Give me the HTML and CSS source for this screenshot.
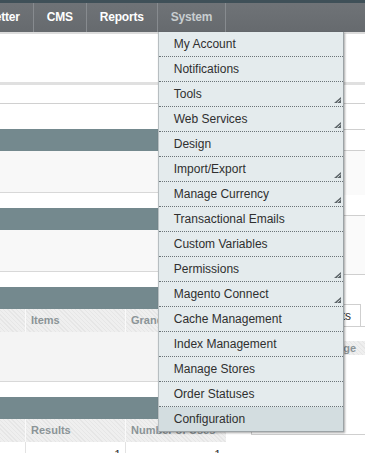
FILE: index.html
```html
<!DOCTYPE html>
<html lang="en">
<head>
  <meta charset="UTF-8" />
  <title>Magento Admin - System</title>
  <link rel="stylesheet" href="styles.css">
</head>
<body>

  <div class="header-strip"></div>
  <div class="nav-bar">
    <ul class="nav">
      <li class="nav-item">Newsletter</li>
      <li class="nav-item">CMS</li>
      <li class="nav-item">Reports</li>
      <li class="nav-item active">System
        <ul class="dropdown">
          <li>My Account</li>
          <li>Notifications</li>
          <li class="parent">Tools</li>
          <li class="parent">Web Services</li>
          <li>Design</li>
          <li class="parent">Import/Export</li>
          <li class="parent">Manage Currency</li>
          <li>Transactional Emails</li>
          <li>Custom Variables</li>
          <li class="parent">Permissions</li>
          <li class="parent">Magento Connect</li>
          <li>Cache Management</li>
          <li>Index Management</li>
          <li>Manage Stores</li>
          <li>Order Statuses</li>
          <li class="over">Configuration</li>
        </ul>
      </li>
    </ul>
  </div>
  <div class="nav-shadow"></div>

  <div class="page-head"></div>
  <div class="page-sub"></div>

  <div class="columns">
    <div class="col-left">
      <div class="box">
        <div class="box-head"></div>
        <div class="box-body"></div>
      </div>
      <div class="box">
        <div class="box-head"></div>
        <div class="box-body"></div>
      </div>
      <div class="box">
        <div class="box-head"></div>
        <div class="grid-head">
          <div class="cell first"></div>
          <div class="cell">Items</div>
          <div class="cell">Grand Total</div>
        </div>
        <div class="box-body tall"></div>
      </div>
      <div class="box">
        <div class="box-head"></div>
        <div class="grid-head">
          <div class="cell first"></div>
          <div class="cell">Results</div>
          <div class="cell">Number of Uses</div>
        </div>
        <div class="grid-row">
          <div class="cell first"></div>
          <div class="cell num">1</div>
          <div class="cell num">1</div>
        </div>
      </div>
    </div>

    <div class="col-right">
      <div class="stat">
        <div class="stat-head"></div>
        <div class="stat-body"></div>
      </div>
      <div class="stat">
        <div class="stat-head"></div>
        <div class="stat-body big"></div>
      </div>
      <ul class="tabs">
        <li class="tab">Orders</li>
        <li class="tab active">Amounts</li>
      </ul>
      <div class="tab-panel">
        <div class="panel-head">Average</div>
      </div>
    </div>
  </div>

  <script>
    document.querySelectorAll('.dropdown .parent').forEach(item => {
      item.insertAdjacentHTML('beforeend',
        '<svg class="arrow" width="7" height="6" viewBox="0 0 7 6">' +
        '<path d="M0 6 L7 0 L7 6 Z" fill="#5e666a"/>' +
        '<path d="M3.2 5.6 L6.6 2.6" stroke="#dfe6e8" stroke-width="0.9"/>' +
        '</svg>');
    });
  </script>

</body>
</html>
```

FILE: styles.css
```css
body {
  margin: 0;
  font-family: 'Liberation Sans', Arial, Helvetica, sans-serif;
  font-size: 12px;
  color: #2f2f2f;
  background: #fff;
  overflow: hidden;
}

ul {
  list-style: none;
  margin: 0;
  padding: 0;
}

.header-strip {
  height: 3px;
  background: #3f5058;
}

.nav-bar {
  height: 29px;
  background: linear-gradient(#6f7377, #666a6e);
}

.nav {
  display: flex;
  margin-left: -52px;
}

.nav-item {
  position: relative;
  padding: 0 13px;
  line-height: 29px;
  font-weight: bold;
  letter-spacing: -0.2px;
  color: #fff;
  border-right: 1px solid #878b8f;
  white-space: nowrap;
}

.nav-item.active {
  color: #c8cdd0;
}

.nav-shadow {
  height: 2px;
  background: #dcdcdc;
}

.dropdown {
  position: absolute;
  top: 100%;
  left: 0;
  width: 184px;
  background: #e4ebed;
  border-left: 1px solid #b7bec1;
  border-right: 1px solid #9ca3a6;
  border-bottom: 1px solid #9ca3a6;
  box-shadow: 1px 1px 2px rgba(0, 0, 0, 0.35);
  z-index: 10;
}

.dropdown li {
  position: relative;
  height: 24px;
  line-height: 24px;
  padding-left: 15px;
  font-weight: normal;
  letter-spacing: 0;
  color: #2f2f2f;
  border-bottom: 1px dotted #6b7478;
}

.dropdown li.over {
  background: #d3dde0;
  border-bottom: none;
}

.dropdown .arrow {
  position: absolute;
  right: 2px;
  bottom: 3px;
}

.page-head {
  height: 48px;
  border-bottom: 3px solid #e0e0e0;
}

.page-sub {
  height: 18px;
  border-bottom: 1px solid #d0d0d0;
  margin-bottom: 25px;
}

.columns {
  display: flex;
  gap: 25px;
}

.col-left {
  width: 226px;
  flex-shrink: 0;
}

.col-right {
  flex: 1;
  min-width: 140px;
}

.box {
  margin-bottom: 15px;
}

.box-head {
  height: 22px;
  background: #74898e;
}

.box-body {
  height: 41px;
  background: #f8f8f8;
  border-bottom: 1px solid #d8d8d8;
}

.box-body.tall {
  height: 49px;
  background: #f4f4f4;
}

.grid-head,
.grid-row {
  display: grid;
  grid-template-columns: 25px 100px 100px;
}

.grid-head {
  height: 23px;
  background: repeating-linear-gradient(45deg, #e6e6e6 0 1px, #efefef 1px 3px);
}

.grid-head .cell {
  padding-left: 5px;
  line-height: 23px;
  font-size: 11px;
  font-weight: bold;
  color: #8b9497;
  border-left: 1px solid #fafafa;
  white-space: nowrap;
  overflow: hidden;
}

.grid-head .cell.first,
.grid-row .cell.first {
  border-left: none;
}

.grid-row .cell {
  height: 20px;
  line-height: 20px;
  padding-top: 3px;
  border-left: 1px solid #e2e2e2;
}

.grid-row .cell.num {
  text-align: right;
  padding-right: 4px;
}

.stat-head {
  height: 20px;
  border-top: 1px solid #cfcfcf;
  border-bottom: 1px solid #cfcfcf;
}

.stat-body {
  height: 44px;
  background: #fafafa;
}

.stat-body.big {
  height: 58px;
  border-bottom: 1px solid #cfcfcf;
}

.stat + .stat .stat-head {
  border-top: none;
}

.tabs {
  display: flex;
  margin-top: 29px;
  height: 22px;
}

.tab {
  padding: 0 4px;
  line-height: 22px;
  border: 1px solid #cfcfcf;
  border-bottom: none;
  background: #f2f2f2;
  white-space: nowrap;
}

.tab.active {
  padding: 0 9px 0 5px;
  background: #fff;
}

.tab-panel {
  height: 109px;
  width: 200px;
  border: 1px solid #cfcfcf;
  padding-top: 14px;
  box-sizing: border-box;
}

.panel-head {
  height: 14px;
  line-height: 14px;
  padding-left: 61px;
  font-size: 11px;
  font-weight: bold;
  color: #8b9497;
  background: repeating-linear-gradient(45deg, #e6e6e6 0 1px, #efefef 1px 3px);
}
```
